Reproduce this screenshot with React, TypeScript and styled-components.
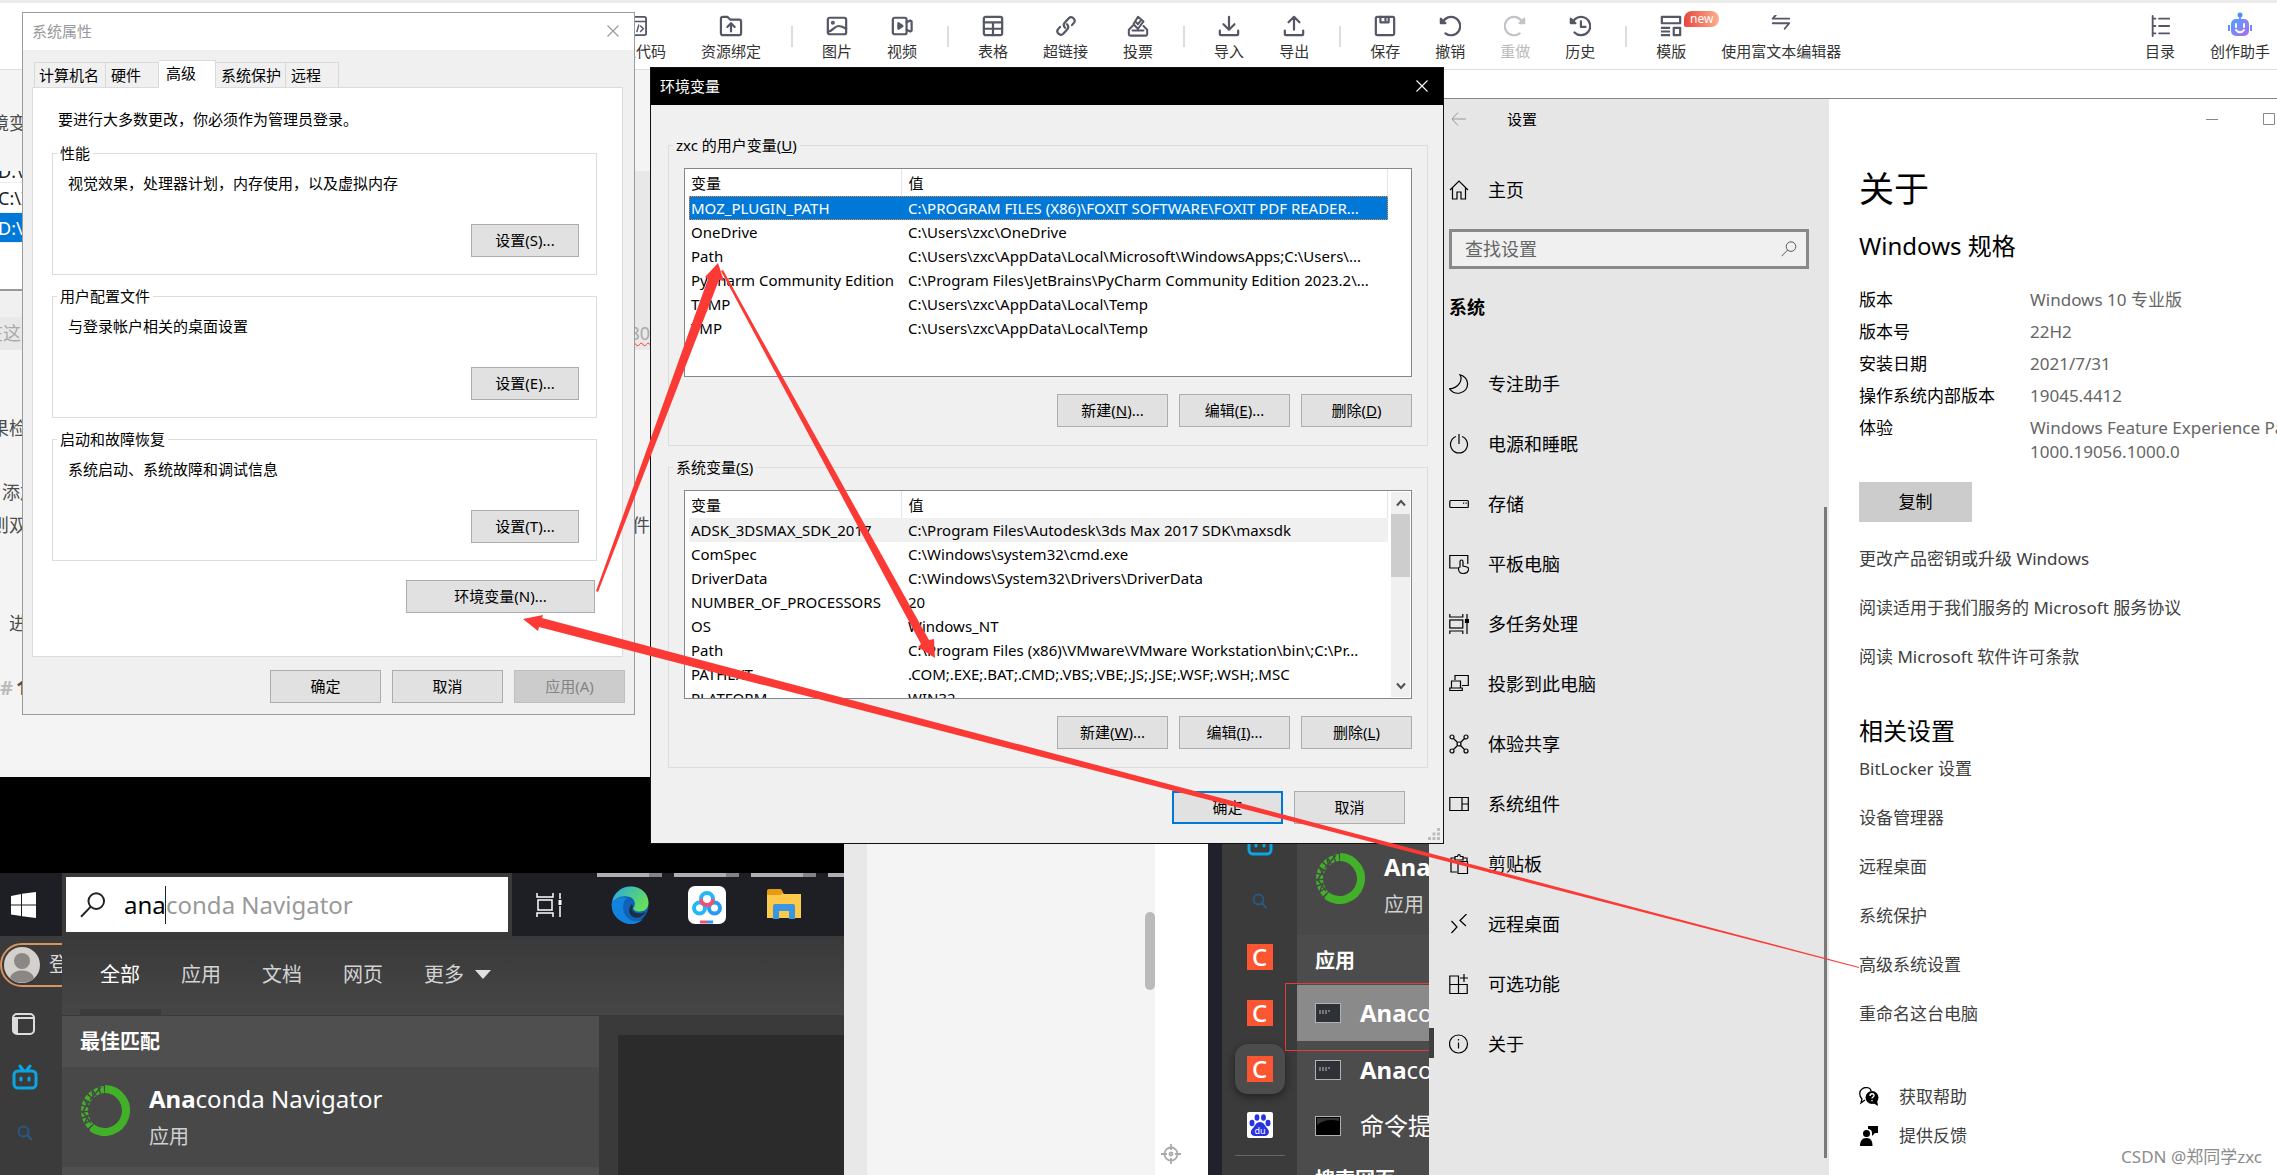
import React from "react";
import styled, { createGlobalStyle, css } from "styled-components";

const UI_FONT = '"Noto Sans", "Noto Sans CJK SC", sans-serif';

const GlobalStyle = createGlobalStyle`
  *, *::before, *::after { box-sizing: border-box; }
  html, body { margin: 0; padding: 0; background: #fff; }
  body { font-family: ${UI_FONT}; font-size: 15px; line-height: 20px; color: #000; }
  button, input { font: inherit; color: inherit; margin: 0; padding: 0; }
  h1, h2, h3, p, ul, dl, dd, fieldset { margin: 0; padding: 0; }
  ul { list-style: none; }
  a { text-decoration: none; color: inherit; }
  svg { display: block; flex: none; }
`;

/* ---------- page ---------- */

const Page = styled.div`
  position: relative;
  display: flex;
  flex-direction: column;
  height: 100vh;
  overflow: hidden;
  background: #fff;
`;

const Body = styled.div`
  flex: 1;
  min-height: 0;
  display: grid;
  grid-template-columns: 1429px minmax(0, 1fr);
`;

/* ---------- toolbar ---------- */

const Toolbar = styled.header`
  display: flex;
  justify-content: space-between;
  align-items: flex-start;
  height: 70px;
  padding: 12px 7px 0 606px;
  border-top: 3px solid #ececec;
  border-bottom: 1px solid #dedede;
  background: #fff;
`;

const ToolGroups = styled.div`
  display: flex;
`;

const ToolGroup = styled.div`
  display: flex;
  gap: 35px;
  & + & {
    margin-left: 30px;
    padding-left: 31px;
    background: linear-gradient(#ddd, #ddd) 0 11px / 2px 21px no-repeat;
  }
`;

const ToolButton = styled.button<{ $off?: boolean }>`
  position: relative;
  display: flex;
  flex-direction: column;
  align-items: center;
  gap: 4px;
  border: 0;
  background: none;
  white-space: nowrap;
  color: ${(p) => (p.$off ? "#c3c3c8" : "#555666")};
  span { color: ${(p) => (p.$off ? "#bbb" : "#333")}; }
`;

const NewBadge = styled.em`
  position: absolute;
  left: 28px;
  top: -4px;
  width: 35px;
  height: 16px;
  border-radius: 8px 8px 8px 2px;
  background: linear-gradient(90deg, #e8463f, #fbb08c);
  color: #fff;
  font-size: 12px;
  line-height: 15px;
  font-style: normal;
`;

/* ---------- editor column ---------- */

const LeftColumn = styled.div`
  display: flex;
  flex-direction: column;
  min-width: 0;
  min-height: 0;
`;

const Editor = styled.section`
  flex: 0 0 707px;
  width: 650px;
  padding-top: 41px;
  overflow: hidden;
  background: #f4f4f4;
  font-size: 18px;
  line-height: 24px;
  color: #4d4d4d;
`;

const EditorLine = styled.p<{ $indent?: number; $gap?: number }>`
  display: flex;
  justify-content: space-between;
  margin-top: ${(p) => p.$gap ?? 0}px;
  text-indent: ${(p) => p.$indent ?? -9}px;
  white-space: nowrap;
  span:last-child:not(:first-child) { text-indent: 0; }
`;

const QuoteBlock = styled.div`
  margin-top: 36px;
  background: #e8e8e8;
`;

const PathShot = styled.ul`
  width: 300px;
  height: 146px;
  overflow: hidden;
  background: linear-gradient(#fff, #fff) 0 0 / 100% 119px no-repeat #f0f0f0;
  li {
    height: 30px;
    line-height: 30px;
    padding-left: 1px;
    text-indent: -3px;
    border-bottom: 1px solid #eee;
    color: #222;
  }
  li:first-child { height: 12px; line-height: 0; }
  li.on { background: #0078d7; color: #fff; }
  li:last-child { height: 48px; border-bottom: 2px solid #999; }
`;

const QuoteLine = styled(EditorLine)`
  height: 33px;
  line-height: 32px;
  color: #aaa;
  u { text-indent: 0; text-decoration: underline wavy #f33 1px; text-underline-offset: 2px; }
`;

const EditorHeading = styled.h3`
  margin-top: 41px;
  font-size: 20px;
  line-height: 24px;
  i { font-style: normal; color: #bbb; margin-right: 3px; }
`;

/* ---------- bottom strip ---------- */

const Strip = styled.section`
  flex: 1;
  min-height: 0;
  display: flex;
  overflow: hidden;
`;

const StartShot = styled.div`
  flex: 0 0 844px;
  width: 844px;
  min-width: 0;
  display: flex;
  flex-direction: column;
  padding-top: 96px;
  overflow: hidden;
  background: #000;
  color: #fff;
`;

const TaskBar = styled.div`
  flex: none;
  display: flex;
  height: 63px;
  background: #1d1f25;
`;

const StartButton = styled.button`
  flex: none;
  width: 62px;
  padding-left: 10px;
  border: 0;
  background: none;
`;

const SearchFrame = styled.label`
  flex: none;
  width: 450px;
  padding: 4px;
  background: #3a3a3a;
`;

const SearchBox = styled.span`
  display: flex;
  align-items: center;
  height: 55px;
  padding-left: 14px;
  background: #fff;
  font-size: 24px;
  line-height: 38px;
  color: #999;
  svg { margin-right: 18px; }
  input {
    width: 42px;
    height: 38px;
    border: 0;
    border-right: 1px solid #222;
    outline: 0;
    color: #000;
    background: none;
  }
`;

const PinnedApps = styled.div`
  flex: 1;
  min-width: 0;
  display: flex;
  overflow: hidden;
  padding-left: 22px;
`;

const PinnedApp = styled.button<{ $open?: boolean }>`
  flex: none;
  display: flex;
  justify-content: center;
  padding: 13px 0 0;
  width: ${(p) => (p.$open ? 65 : 30)}px;
  margin-right: ${(p) => (p.$open ? 12 : 33)}px;
  border: 0;
  background: ${(p) =>
    p.$open ? "linear-gradient(90deg, #b0aeb0 80%, #858385 80%) 0 0 / 100% 4px no-repeat" : "none"};
`;

const StartBody = styled.div`
  flex: 1;
  min-height: 0;
  display: flex;
`;

const Rail = styled.div`
  flex: 0 0 62px;
  display: flex;
  flex-direction: column;
  overflow: hidden;
  background: #3b3b3b;
  padding-top: 7px;
`;

const AccountPill = styled.button`
  display: flex;
  align-items: center;
  gap: 9px;
  width: 120px;
  height: 44px;
  padding: 0 2px;
  border: 2px solid #d9935f;
  border-radius: 22px;
  background: none;
  color: #ddd;
  font-size: 20px;
`;

const RailIcons = styled.div`
  display: flex;
  flex-direction: column;
  gap: 28px;
  padding: 25px 0 0 12px;
`;

const StartPanel = styled.div`
  flex: 1;
  min-width: 0;
  display: flex;
  flex-direction: column;
  background: #4a4a4a;
`;

const StartTabs = styled.div`
  flex: 0 0 80px;
  display: flex;
  padding: 0 18px;
  border-bottom: 1px solid #3a3a3a;
  background: linear-gradient(#393939, #464646);
`;

const StartTab = styled.button<{ $on?: boolean }>`
  display: flex;
  align-items: center;
  gap: 11px;
  height: 79px;
  padding: 4px 21px 0 20px;
  border: 0;
  border-bottom: 6px solid ${(p) => (p.$on ? "#3c3c3c" : "transparent")};
  background: none;
  font-size: 20px;
  color: ${(p) => (p.$on ? "#fff" : "#d2d2d2")};
`;

const StartColumns = styled.div`
  flex: 1;
  min-height: 0;
  display: flex;
`;

const ResultColumn = styled.div`
  flex: 0 0 537px;
  background: #4f4f4f;
`;

const SectionTitle = styled.h3`
  padding: 0 18px;
  font-size: 20px;
  line-height: 51px;
  color: #fff;
`;

const PreviewColumn = styled.div`
  flex: 1;
  padding: 19px 0 0 19px;
  background: #3a3a3a;
  &::before { content: ""; display: block; height: 100%; background: #2b2b2b; }
`;

const BestMatch = styled.a`
  display: flex;
  gap: 18px;
  height: 100px;
  padding: 18px 0 0 18px;
  background: #484848;
  white-space: nowrap;
`;

const AppName = styled.strong`
  display: block;
  font-size: 24px;
  line-height: 28px;
  font-weight: 400;
  color: #fff;
  b { font-weight: 700; }
`;

const AppKind = styled.span`
  display: block;
  margin-top: 11px;
  font-size: 20px;
  line-height: 26px;
  color: #d0d0d0;
`;

const DocPreview = styled.div`
  flex: 1;
  display: flex;
  justify-content: flex-end;
  border-left: 23px solid #e8e8e8;
  background: #f4f4f4;
`;

const ScrollThumb = styled.div`
  width: 10px;
  height: 78px;
  margin-top: 135px;
  border-radius: 5px;
  background: #bababa;
`;

const Gutter = styled.div`
  flex: 0 0 53px;
  display: flex;
  align-items: flex-end;
  padding: 0 0 11px 6px;
  background: #fff;
`;

const AppsShot = styled.div`
  flex: 0 0 221px;
  display: flex;
  padding-left: 14px;
  overflow: hidden;
  background: #1f222b;
  color: #fff;
`;

const AppsRail = styled.div`
  flex: 0 0 75px;
  display: flex;
  flex-direction: column;
  align-items: center;
  padding-top: 53px;
  background: #3b3b3b;
`;

const RailTile = styled.div<{ $on?: boolean }>`
  flex: none;
  display: flex;
  align-items: center;
  justify-content: center;
  width: 50px;
  height: 56px;
  svg + & { margin-top: 17px; }
  ${(p) =>
    p.$on &&
    css`
      height: 50px;
      margin: 3px 0;
      border-radius: 13px;
      background: #4c4c4c;
      box-shadow: 0 3px 8px #222;
    `}
`;

const RailRule = styled.div`
  width: 50px;
  height: 1px;
  margin-top: 2px;
  background: #666;
`;

const AppsList = styled.div`
  flex: 1;
  min-width: 0;
  padding-top: 58px;
  background: #4c4c4c;
  white-space: nowrap;
`;

const AppsRow = styled.a<{ $on?: boolean }>`
  display: flex;
  align-items: center;
  gap: 19px;
  height: 56px;
  padding-left: 18px;
  font-size: 24px;
  line-height: 28px;
  background: ${(p) => (p.$on ? "#8a8a8a" : "transparent")};
`;

const RedFrame = styled.div`
  position: relative;
  z-index: 1;
  margin: -3px -10px -9px -12px;
  padding: 1px 0 0 11px;
  height: 68px;
  border: 1px solid #e5393c;
`;

/* ---------- classic dialogs ---------- */

const Dialog = styled.section<{ $x: number; $y: number; $w: number; $dark?: boolean }>`
  position: absolute;
  left: ${(p) => p.$x}px;
  top: ${(p) => p.$y}px;
  width: ${(p) => p.$w}px;
  border: 1px solid ${(p) => (p.$dark ? "#111" : "#9b9b9b")};
  background: #f0f0f0;
`;

const TitleBar = styled.div<{ $dark?: boolean }>`
  display: flex;
  align-items: center;
  justify-content: space-between;
  height: 37px;
  padding: 0 15px 2px 9px;
  background: ${(p) => (p.$dark ? "#000" : "#fff")};
  color: ${(p) => (p.$dark ? "#fff" : "#999")};
`;

const CloseButton = styled.button`
  border: 0;
  background: none;
`;

const Group = styled.fieldset`
  border: 1px solid #dcdcdc;
  min-width: 0;
  legend {
    margin-left: -11px;
    padding: 0 3px;
    line-height: 20px;
  }
`;

const PushButton = styled.button<{ $w?: number; $primary?: boolean }>`
  width: ${(p) => p.$w ?? 111}px;
  height: 33px;
  padding-bottom: 2px;
  border: ${(p) => (p.$primary ? "2px solid #0078d7" : "1px solid #adadad")};
  background: #e1e1e1;
  &:disabled { background: #ccc; border-color: #bfbfbf; color: #838383; }
`;

const ButtonRow = styled.div<{ $top: number; $right?: number; $bottom?: number }>`
  display: flex;
  justify-content: flex-end;
  gap: 11px;
  margin: ${(p) => `${p.$top}px ${p.$right ?? 0}px ${p.$bottom ?? 0}px 0`};
`;

const DialogTabs = styled.div`
  display: flex;
  align-items: flex-end;
  height: 37px;
  padding-left: 11px;
`;

const DialogTab = styled.button<{ $w: number; $on?: boolean }>`
  width: ${(p) => p.$w}px;
  height: 25px;
  padding-left: 5px;
  text-align: left;
  border: 1px solid #d9d9d9;
  border-width: 1px 1px 0 0;
  background: #f0f0f0;
  white-space: nowrap;
  &:first-child { border-left-width: 1px; padding-left: 4px; }
  ${(p) =>
    p.$on &&
    css`
      position: relative;
      height: 28px;
      margin-bottom: -1px;
      padding: 0 0 4px 7px;
      background: #fff;
    `}
`;

const TabPanel = styled.div`
  margin: 0 11px 0 9px;
  padding: 20px 25px 43px 19px;
  border: 1px solid #dcdcdc;
  background: #fff;
`;

const AdminNote = styled.p`
  padding-left: 6px;
  line-height: 22px;
  margin-bottom: 13px;
`;

const PropGroup = styled(Group)`
  padding: 10px 17px 17px 15px;
  & + & { margin-top: 11px; }
`;

const EnvBody = styled.div`
  padding: 30px 15px 19px 17px;
`;

const EnvGroup = styled(Group)`
  padding: 13px 15px 18px;
  & + & { margin-top: 11px; }
`;

const VarList = styled.div`
  display: flex;
  justify-content: space-between;
  height: 209px;
  padding-left: 4px;
  overflow: hidden;
  border: 1px solid #828790;
  background: #fff;
`;

const VarTable = styled.table`
  width: 699px;
  height: max-content;
  table-layout: fixed;
  border-collapse: collapse;
  th, td {
    padding: 0 0 0 2px;
    text-align: left;
    font-weight: 400;
    white-space: nowrap;
    overflow: hidden;
  }
  th:last-child, td:last-child { padding-left: 7px; }
  th { height: 27px; border-right: 1px solid #e5e5e5; }
  td { height: 24px; line-height: 22px; }
  th:first-child { width: 212px; }
`;

const VarRow = styled.tr<{ $state?: "active" | "idle" }>`
  ${(p) => p.$state === "active" && "background:#0078d7;color:#fff;outline:1px dotted #ff8728;outline-offset:-1px;"}
  ${(p) => p.$state === "idle" && "background:#f0f0f0;"}
`;

const VarScroll = styled.div`
  display: flex;
  flex-direction: column;
  align-items: center;
  justify-content: space-between;
  width: 19px;
  margin: 1px 1px 1px 0;
  padding: 7px 0;
  background: linear-gradient(#cdcdcd, #cdcdcd) 0 22px / 100% 63px no-repeat #f0f0f0;
`;

const Grip = styled.svg`
  position: absolute;
  right: 3px;
  bottom: 3px;
`;

/* ---------- settings window ---------- */

const Settings = styled.section`
  display: flex;
  min-width: 0;
  margin-top: 28px;
  border-top: 1px solid #858585;
  background: #fff;
  font-size: 17px;
  line-height: 24px;
  overflow: hidden;
`;

const Sidebar = styled.aside`
  position: relative;
  flex: 0 0 400px;
  background: #e6e6e6;
  font-size: 18px;
  h3 { margin: 26px 0 35px 20px; font-size: 18px; line-height: 24px; }
`;

const SideTitle = styled.div`
  display: flex;
  align-items: center;
  gap: 41px;
  height: 40px;
  padding-left: 22px;
  font-size: 15px;
  button { border: 0; background: none; color: #999; }
`;

const SideItem = styled.a<{ $home?: boolean; $on?: boolean }>`
  position: relative;
  display: flex;
  align-items: center;
  gap: 19px;
  height: ${(p) => (p.$home ? 40 : 60)}px;
  margin-top: ${(p) => (p.$home ? 31 : 0)}px;
  padding-left: 20px;
  ${(p) =>
    p.$on &&
    css`
      &::before {
        content: "";
        position: absolute;
        left: 0;
        top: 14px;
        width: 5px;
        height: 30px;
        background: #3f3f3f;
      }
    `}
`;

const SideSearch = styled.label`
  display: flex;
  align-items: center;
  height: 40px;
  margin: 19px 20px 0;
  padding: 0 9px 0 13px;
  border: 3px solid #898989;
  background: #f0f0f0;
  color: #555;
  input { flex: 1; min-width: 0; border: 0; outline: 0; background: none; }
  input::placeholder { color: #666; opacity: 1; }
`;

const SideScroll = styled.div`
  position: absolute;
  right: 2px;
  top: 408px;
  width: 3px;
  height: 651px;
  background: #7a7a7a;
`;

const Main = styled.main`
  flex: 1;
  min-width: 0;
  padding-left: 30px;
  white-space: nowrap;
  overflow: hidden;
  h1 { margin-top: 25px; font-size: 35px; line-height: 50px; font-weight: 400; }
`;

const WinControls = styled.div`
  display: flex;
  justify-content: flex-end;
  align-items: center;
  gap: 45px;
  height: 40px;
  padding-right: 2px;
  color: #888;
  button { border: 0; background: none; }
`;

const PaneTitle = styled.h2<{ $top: number }>`
  margin-top: ${(p) => p.$top}px;
  font-size: 24px;
  line-height: 36px;
  font-weight: 400;
`;

const Spec = styled.dl`
  display: grid;
  grid-template-columns: 171px 1fr;
  margin-top: 20px;
  dt, dd { padding: 4px 0; }
  dd { color: #666; }
`;

const CopyButton = styled.button`
  display: block;
  width: 113px;
  height: 40px;
  margin-top: 14px;
  border: 0;
  background: #ccc;
`;

const Links = styled.ul<{ $top: number; $gap: number }>`
  display: flex;
  flex-direction: column;
  gap: ${(p) => p.$gap}px;
  margin-top: ${(p) => p.$top}px;
  color: #404040;
  a { display: flex; align-items: center; gap: 20px; }
  svg { color: #000; }
`;

/* ---------- overlays ---------- */

const ArrowLayer = styled.svg`
  position: absolute;
  left: 0;
  top: 0;
  pointer-events: none;
`;

const Watermark = styled.span`
  position: absolute;
  right: 15px;
  bottom: 6px;
  font-size: 17px;
  line-height: 24px;
  color: #8c8c8c;
  text-shadow: 1px 1px 0 #fff;
`;

/* ---------- icons ---------- */

type Draw = { children: React.ReactNode; size?: number; w?: number; sw?: number; box?: string };
const Ico = ({ children, size = 22, w, sw = 2, box = "0 0 24 24" }: Draw) => (
  <svg width={w ?? size} height={size} viewBox={box} fill="none" stroke="currentColor" strokeWidth={sw} strokeLinecap="round" strokeLinejoin="round" aria-hidden="true">
    {children}
  </svg>
);
const Thin = ({ children }: { children: React.ReactNode }) => (
  <svg width="20" height="20" viewBox="0 0 20 20" fill="none" stroke="currentColor" strokeWidth="1.2" aria-hidden="true">
    {children}
  </svg>
);
const Cross = ({ size = 12 }: { size?: number }) => (
  <svg width={size} height={size} viewBox="0 0 12 12" stroke="currentColor" strokeWidth="1.1" aria-hidden="true">
    <path d="M.5 .5l11 11M11.5 .5l-11 11" />
  </svg>
);
const Lens = ({ size, sw = 1.2 }: { size: number; sw?: number }) => (
  <svg width={size} height={size} viewBox="0 0 20 20" fill="none" stroke="currentColor" strokeWidth={sw} aria-hidden="true">
    <circle cx="12.5" cy="7" r="6" />
    <path d="M8.3 11.3L.8 19" />
  </svg>
);

const toolIcons: Record<string, React.ReactNode> = {
  code: <Ico><rect x="2" y="2" width="21" height="20" rx="2" /><path d="M2 7h21M10 12l-3 3 3 3M13 18l2-7M17 12l3 3-3 3" strokeWidth="1.6" /></Ico>,
  bind: <Ico w={24} box="0 0 26 24" sw={2.4}><path d="M2 4a2 2 0 0 1 2-2h5l3 3h10a2 2 0 0 1 2 2v13a2 2 0 0 1-2 2H4a2 2 0 0 1-2-2zM13 18v-8M9 13l4-4 4 4" /></Ico>,
  image: <Ico sw={2.4}><rect x="2" y="3" width="20" height="18" rx="2" /><circle cx="7.5" cy="8.5" r="1" /><path d="M3 18c5-1 6-6 11-6 3 0 5 1 8 3" /></Ico>,
  video: <Ico sw={2.4}><rect x="2" y="3" width="15" height="18" rx="2" /><path d="M17 8l4-2 1.5 1v10L21 18l-4-2" /><path d="M8 9v6l4.500-3z" fill="currentColor" /></Ico>,
  table: <Ico sw={2.4}><rect x="2" y="2" width="20" height="20" rx="2" /><path d="M2 8h20M2 15h20M12 8v14" /></Ico>,
  link: <Ico sw={2.4}><path d="M11 14c-3-3-1-5 0-6l4-4.500c3-3 8 1 6 4.500l-2.500 3M13 10c3 3 1 5 0 6l-4 4.500c-3 3-8-1-6-4.500L5.500 13" /></Ico>,
  vote: <Ico sw={2.2}><path d="M6 12l-4 4v5a1.500 1.500 0 0 0 1.500 1.500h17A1.500 1.500 0 0 0 22 21v-5l-4-4M6 17h12M12 2l6 5-6 8-5-5zM10 8l2 2 3-4" /></Ico>,
  down: <Ico sw={2.4}><path d="M12 2v13M6 10l6 6 6-6M2 17v4a1 1 0 0 0 1 1h18a1 1 0 0 0 1-1v-4" /></Ico>,
  up: <Ico sw={2.4}><path d="M12 16V2M6 8l6-6 6 6M2 17v4a1 1 0 0 0 1 1h18a1 1 0 0 0 1-1v-4" /></Ico>,
  save: <Ico sw={2.4}><rect x="2" y="2" width="20" height="20" rx="1.500" /><path d="M7 2v6h9V2M12.500 3v3" /></Ico>,
  undo: <Ico sw={2.4}><path d="M2 4v5h5z" fill="currentColor" /><path d="M4 8a10 10 0 1 1 3 12" /></Ico>,
  redo: <Ico sw={2.4}><path d="M22 4v5h-5z" fill="currentColor" /><path d="M20 8a10 10 0 1 0-3 12" /></Ico>,
  history: <Ico sw={2.4}><path d="M2 4v5h5z" fill="currentColor" /><path d="M4 8a10 10 0 1 1 2 11M13 7v6h5" /></Ico>,
  layout: <Ico sw={2.4}><rect x="2" y="2" width="20" height="7" /><path d="M1 14h10M1 18h10M1 22h10" strokeLinecap="butt" /><rect x="15" y="14" width="7" height="8" /></Ico>,
  swap: <Ico><path d="M3 9h18M3 9l5-6M3 14h18l-5 6" transform="translate(0 -5)" /></Ico>,
  toc: <Ico><path d="M4 1v22M4 4h3M4 12h3M4 20h3M11 4h11M11 12h11M11 20h11" /></Ico>,
};

const Robot = () => (
  <svg width="26" height="26" viewBox="0 0 26 26" aria-hidden="true">
    <defs>
      <linearGradient id="robot" x1="0" y1="0" x2="1" y2="1">
        <stop offset="0" stopColor="#4aa3ff" />
        <stop offset="1" stopColor="#b06af0" />
      </linearGradient>
    </defs>
    <circle cx="13" cy="3" r="2.500" fill="#4a90f0" />
    <path d="M12 4h2v4h-2zM1 13h2v6H1zM23 13h2v6h-2z" fill="#6a8cf5" />
    <rect x="4" y="7" width="18" height="17" rx="5" fill="url(#robot)" />
    <path d="M9 12v3M17 12v3M9 18c2 3 6 3 8 0" stroke="#fff" strokeWidth="2" fill="none" strokeLinecap="round" />
  </svg>
);

const Bili = () => (
  <svg width="26" height="26" viewBox="0 0 26 26" fill="none" stroke="#0aa5e2" strokeWidth="3" strokeLinecap="round" aria-hidden="true">
    <rect x="2" y="7" width="22" height="17" rx="4" />
    <path d="M8 2l3 4M18 2l-3 4M9 14v2M17 14v2" />
  </svg>
);

const Ring = () => (
  <svg width="51" height="51" viewBox="0 0 51 51" fill="none" aria-hidden="true">
    <path d="M25 4A21.500 21.500 0 1 1 12 43" stroke="#43b02a" strokeWidth="8" />
    <path d="M24 4.500A21.500 21.500 0 0 0 13 43" stroke="#43b02a" strokeWidth="7" strokeDasharray="4 1.500" />
    <path d="M21 2L10 15M12 6l2 8M4 14l6 10M9 16L2 28M3 27l8 11M8 30l-3 8" stroke="#484848" strokeWidth="1.500" />
  </svg>
);

const WinLogo = () => (
  <svg width="27" height="26" viewBox="0 0 27 26" fill="#fff" aria-hidden="true">
    <path d="M1 4l10-2v10.500H1zM12 1.800L26 0v12.500H12zM1 13.500h10V24L1 22.500zM12 13.500h14V26l-14-1.800z" />
  </svg>
);

const TaskView = () => (
  <svg width="27" height="26" viewBox="0 0 27 26" fill="none" stroke="#fff" strokeWidth="1.500" aria-hidden="true">
    <path d="M1 1v4h16V1M1 25v-4h16v4M24 1v6M24 14v11" />
    <rect x="2" y="8" width="14" height="10" />
    <path d="M22.500 8h3v5h-3z" fill="#fff" stroke="none" />
  </svg>
);

const Edge = () => (
  <svg width="38" height="38" viewBox="0 0 38 38" aria-hidden="true">
    <defs>
      <linearGradient id="edgeTop" x1="0" y1="0" x2="1" y2=".6">
        <stop offset="0" stopColor="#2aa7e0" />
        <stop offset="1" stopColor="#66e05a" />
      </linearGradient>
    </defs>
    <circle cx="19" cy="19" r="18.500" fill="#0f62b8" />
    <path d="M1 17C3 6 11 .5 20 .5c10 0 17.500 7 17.500 16 0 6-4 9-9 9-4 0-7-2-6-4 3-4 1-10-6-11C9 9 3 13 1 17z" fill="url(#edgeTop)" />
    <path d="M1 17c3-5 10-7 15-5-5 4-6 15 2 21 5 4 11 2 14 0-5 6-15 7-22 2C3 31 0 24 1 17z" fill="#1382dc" />
    <path d="M22 21c-3 3 3 9 13 5-3 5-9 7-13 5-5-3-5-9-1-13z" fill="#1d1f25" opacity=".75" />
  </svg>
);

const Netdisk = () => (
  <svg width="38" height="38" viewBox="0 0 38 38" fill="none" aria-hidden="true">
    <rect width="38" height="38" rx="7" fill="#fff" />
    <circle cx="11.500" cy="22" r="5.500" stroke="#22b8f5" strokeWidth="4" />
    <circle cx="26.500" cy="22" r="5.500" stroke="#2a9bf5" strokeWidth="4" />
    <path d="M13 13a6 6 0 0 1 12 0" stroke="#22b8f5" strokeWidth="4" />
    <path d="M13 13a6 6 0 0 0 12 0" stroke="#f2506e" strokeWidth="4" />
    <path d="M12 36h7" stroke="#f2506e" strokeWidth="3" />
    <path d="M19 36h6" stroke="#2a9bf5" strokeWidth="3" />
  </svg>
);

const Folder = () => (
  <svg width="36" height="36" viewBox="0 0 36 36" aria-hidden="true">
    <path d="M1 5h14l3 3h17v24H1z" fill="#fcc94a" />
    <path d="M1 5a2 2 0 0 1 2-2h12l2 3-2 3H1z" fill="#e59b12" />
    <path d="M7 20a2 2 0 0 1 2-2h18a2 2 0 0 1 2 2v13h-6v-8H13v8H7z" fill="#3a96e0" />
  </svg>
);

const CLetter = styled.span`
  display: flex;
  align-items: center;
  justify-content: center;
  width: 26px;
  height: 26px;
  background: #fc5531;
  color: #fff;
  font-size: 24px;
  font-weight: 500;
  line-height: 24px;
`;

const Paw = () => (
  <svg width="26" height="26" viewBox="0 0 26 26" aria-hidden="true">
    <rect width="26" height="26" rx="2" fill="#fff" />
    <g fill="#2932e1">
      <ellipse cx="5" cy="11" rx="2.500" ry="3.200" />
      <ellipse cx="10" cy="5.500" rx="2.400" ry="3.300" />
      <ellipse cx="16.500" cy="5.500" rx="2.400" ry="3.300" />
      <ellipse cx="21" cy="11" rx="2.500" ry="3.200" />
      <path d="M13 10c4 0 5 4 7 6 4 4 1 8-2 8H8c-4 0-6-4-2-8 2-2 3-6 7-6z" />
    </g>
    <text x="13" y="21.500" textAnchor="middle" fontSize="9" fill="#fff" fontFamily={UI_FONT}>du</text>
  </svg>
);

const Terminal = ({ plain }: { plain?: boolean }) => (
  <svg width="26" height="20" viewBox="0 0 26 20" aria-hidden="true">
    <rect x=".5" y=".5" width="25" height="19" fill={plain ? "#000" : "#2e3236"} stroke="#aeb2b6" />
    {plain ? <path d="M2 9c6-5 14-6 22-4V2H2z" fill="#333" /> : <path d="M4 8h12M4 10h8" stroke="#bbb" strokeDasharray="2 1" />}
  </svg>
);

const sideIcons: Record<string, React.ReactNode> = {
  home: <Thin><path d="M1 10l9-9 9 9M3.500 8v11h4.500v-7h4v7h4.500V8" /></Thin>,
  moon: <Thin><path d="M11 .8c3 5-1 13-10.500 14C3 18 7 19.800 11 19c5-1 8-5 7.500-10C18 5 15 2 11 .8z" /></Thin>,
  power: <Thin><path d="M10 0v10M7 2.500a8.500 8.500 0 1 0 6 0" /></Thin>,
  disk: <Thin><rect x=".8" y="6.500" width="18.500" height="7" rx="1" /><path d="M14 9.200h1.200M16.500 9.200h1.200" /></Thin>,
  tablet: <Thin><path d="M10 14H.8V1.500h18V10" /><path d="M11 13V7.500c0-2 3-2 3 0V12l4 1c2 .5 1.500 2 1.500 3-.5 2-2 3.500-5 3.500-3 0-5-2-5-4.500 0-1 .5-2 1.500-2z" /></Thin>,
  tasks: <Thin><path d="M.8 0v3h13V0M.8 20v-3h13v3M18 0v5M18 9v11" /><rect x=".8" y="6" width="13" height="8" /><path d="M16.500 5.500h3v3h-3z" fill="currentColor" /></Thin>,
  project: <Thin><path d="M6 6V1.500h13.300v10H13" /><path d="M2.500 14V7h9v7M.8 14h12.500v2.500H.8z" /></Thin>,
  share: <Thin><circle cx="3" cy="3" r="2" /><circle cx="17" cy="3" r="2" /><circle cx="3" cy="17" r="2" /><circle cx="17" cy="17" r="2" /><circle cx="10" cy="10" r="2" /><path d="M4.500 4.500l4 4M15.500 4.500l-4 4M4.500 15.500l4-4M15.500 15.500l-4-4" /></Thin>,
  parts: <Thin><path d="M.8 3.500h18.500v13H.8zM13 3.500v13M13 10h6" /></Thin>,
  clip: <Thin><path d="M6 4H2v14h6M14 4h4v3M6 2.500h2.500C9 0 11 0 11.500 2.500H14V6H6zM9 7.500h9.500v12H9z" /></Thin>,
  remote: <Thin><path d="M2.500 7l5.500 6-5.500 6M17.500 0L11 6.500l6 5.500" /></Thin>,
  optional: <Thin><path d="M.8 2h8.700v17.500H.8zM9.500 10.500h8.700v9H9.500M.8 10.500h8.700M15 0v8M11 4h8" /></Thin>,
  info: <Thin><circle cx="9.500" cy="10" r="9" /><path d="M9.500 8.500v6M9.500 5v1.500" /></Thin>,
};

/* ---------- data ---------- */

type Tool = { label: string; icon: string; off?: boolean; badge?: string };
const tools: Tool[][] = [
  [{ label: "插入代码", icon: "code" }, { label: "资源绑定", icon: "bind" }],
  [{ label: "图片", icon: "image" }, { label: "视频", icon: "video" }],
  [{ label: "表格", icon: "table" }, { label: "超链接", icon: "link" }, { label: "投票", icon: "vote" }],
  [{ label: "导入", icon: "down" }, { label: "导出", icon: "up" }],
  [{ label: "保存", icon: "save" }, { label: "撤销", icon: "undo" }, { label: "重做", icon: "redo", off: true }, { label: "历史", icon: "history" }],
  [{ label: "模版", icon: "layout", badge: "new" }, { label: "使用富文本编辑器", icon: "swap" }],
];

const userVars = [
  ["MOZ_PLUGIN_PATH", "C:\\PROGRAM FILES (X86)\\FOXIT SOFTWARE\\FOXIT PDF READER..."],
  ["OneDrive", "C:\\Users\\zxc\\OneDrive"],
  ["Path", "C:\\Users\\zxc\\AppData\\Local\\Microsoft\\WindowsApps;C:\\Users\\..."],
  ["PyCharm Community Edition", "C:\\Program Files\\JetBrains\\PyCharm Community Edition 2023.2\\..."],
  ["TEMP", "C:\\Users\\zxc\\AppData\\Local\\Temp"],
  ["TMP", "C:\\Users\\zxc\\AppData\\Local\\Temp"],
];
const systemVars = [
  ["ADSK_3DSMAX_SDK_2017", "C:\\Program Files\\Autodesk\\3ds Max 2017 SDK\\maxsdk"],
  ["ComSpec", "C:\\Windows\\system32\\cmd.exe"],
  ["DriverData", "C:\\Windows\\System32\\Drivers\\DriverData"],
  ["NUMBER_OF_PROCESSORS", "20"],
  ["OS", "Windows_NT"],
  ["Path", "C:\\Program Files (x86)\\VMware\\VMware Workstation\\bin\\;C:\\Pr..."],
  ["PATHEXT", ".COM;.EXE;.BAT;.CMD;.VBS;.VBE;.JS;.JSE;.WSF;.WSH;.MSC"],
  ["PLATFORM", "WIN32"],
];

const propGroups = [
  { title: "性能", text: "视觉效果，处理器计划，内存使用，以及虚拟内存", key: "S" },
  { title: "用户配置文件", text: "与登录帐户相关的桌面设置", key: "E" },
  { title: "启动和故障恢复", text: "系统启动、系统故障和调试信息", key: "T" },
];

const sideItems = [
  ["moon", "专注助手"], ["power", "电源和睡眠"], ["disk", "存储"], ["tablet", "平板电脑"],
  ["tasks", "多任务处理"], ["project", "投影到此电脑"], ["share", "体验共享"], ["parts", "系统组件"],
  ["clip", "剪贴板"], ["remote", "远程桌面"], ["optional", "可选功能"], ["info", "关于"],
];

/* ---------- sections ---------- */

const TopBar = () => (
  <Toolbar>
    <ToolGroups>
      {tools.map((group, i) => (
        <ToolGroup key={i}>
          {group.map((t) => (
            <ToolButton key={t.label} $off={t.off}>
              {toolIcons[t.icon]}
              <span>{t.label}</span>
              {t.badge && <NewBadge>{t.badge}</NewBadge>}
            </ToolButton>
          ))}
        </ToolGroup>
      ))}
    </ToolGroups>
    <ToolGroup>
      <ToolButton>{toolIcons.toc}<span>目录</span></ToolButton>
      <ToolButton>
        <svg width="26" height="22" viewBox="0 3 26 22" overflow="visible" aria-hidden="true"><Robot /></svg>
        <span>创作助手</span>
      </ToolButton>
    </ToolGroup>
  </Toolbar>
);

const EditorPane = () => (
  <Editor>
    <EditorLine><span>境变量</span></EditorLine>
    <QuoteBlock>
      <PathShot>
        <li>D:\</li>
        <li>C:\I</li>
        <li className="on">D:\</li>
        <li />
      </PathShot>
      <QuoteLine $indent={-15}><span>在这里</span><u>80</u></QuoteLine>
    </QuoteBlock>
    <EditorLine $gap={66}><span>果检测</span></EditorLine>
    <EditorLine $gap={40} $indent={2}><span>添加</span></EditorLine>
    <EditorLine $gap={9}><span>则双击</span><span>件</span></EditorLine>
    <EditorLine $gap={74} $indent={9}><span>进入</span></EditorLine>
    <EditorHeading><i>#</i>1</EditorHeading>
  </Editor>
);

const StartMenu = () => (
  <StartShot>
    <TaskBar>
      <StartButton aria-label="开始"><WinLogo /></StartButton>
      <SearchFrame>
        <SearchBox>
          <svg width="26" height="26" viewBox="0 0 20 20" fill="none" stroke="#222" strokeWidth="1.500"><circle cx="12.500" cy="7" r="6" /><path d="M8.300 11.300L.8 19" /></svg>
          <input aria-label="搜索" defaultValue="ana" />
          conda Navigator
        </SearchBox>
      </SearchFrame>
      <PinnedApps>
        <PinnedApp aria-label="任务视图"><svg width="27" height="38" viewBox="0 -6 27 38"><TaskView /></svg></PinnedApp>
        <PinnedApp $open aria-label="Edge"><Edge /></PinnedApp>
        <PinnedApp $open aria-label="网盘"><Netdisk /></PinnedApp>
        <PinnedApp $open aria-label="文件"><Folder /></PinnedApp>
        <PinnedApp $open aria-label="应用" />
      </PinnedApps>
    </TaskBar>
    <StartBody>
      <Rail>
        <AccountPill>
          <svg width="36" height="36" viewBox="0 0 36 36"><circle cx="18" cy="18" r="18" fill="#d4d0cc" /><circle cx="18" cy="14" r="8" fill="#8b8784" /><path d="M6 31c2-10 22-10 24 0-6 6-18 6-24 0z" fill="#8b8784" /></svg>
          登
        </AccountPill>
        <RailIcons>
          <svg width="23" height="24" viewBox="0 0 23 24" fill="none" stroke="#ddd" strokeWidth="2"><rect x="1" y="2" width="21" height="20" rx="4" /><path d="M2 6h19" /><path d="M4 6v15" strokeWidth="4" /></svg>
          <Bili />
          <svg width="24" height="30" viewBox="-4 0 24 30" fill="none" stroke="#285a88" strokeWidth="1.800"><circle cx="7.500" cy="13.500" r="5" /><path d="M11 17l5 5" /></svg>
        </RailIcons>
      </Rail>
      <StartPanel>
        <StartTabs>
          <StartTab $on>全部</StartTab>
          <StartTab>应用</StartTab>
          <StartTab>文档</StartTab>
          <StartTab>网页</StartTab>
          <StartTab>更多<svg width="16" height="9" viewBox="0 0 16 9" fill="#e0e0e0"><path d="M0 0h16L8 9z" /></svg></StartTab>
        </StartTabs>
        <StartColumns>
          <ResultColumn>
            <SectionTitle>最佳匹配</SectionTitle>
            <BestMatch href="#navigator">
              <Ring />
              <span>
                <AppName><b>Ana</b>conda Navigator</AppName>
                <AppKind>应用</AppKind>
              </span>
            </BestMatch>
          </ResultColumn>
          <PreviewColumn />
        </StartColumns>
      </StartPanel>
    </StartBody>
  </StartShot>
);

const AppsMenu = () => (
  <AppsShot>
    <AppsRail>
      <Bili />
      <RailTile><svg width="16" height="16" viewBox="0 0 16 16" fill="none" stroke="#285a88" strokeWidth="1.800"><circle cx="6.500" cy="6.500" r="5" /><path d="M10 10.500l5 5" /></svg></RailTile>
      <RailTile><CLetter>C</CLetter></RailTile>
      <RailTile><CLetter>C</CLetter></RailTile>
      <RailTile $on><CLetter>C</CLetter></RailTile>
      <RailTile><Paw /></RailTile>
      <RailRule />
    </AppsRail>
    <AppsList>
      <BestMatch href="#navigator">
        <Ring />
        <span>
          <AppName><b>Ana</b></AppName>
          <AppKind>应用</AppKind>
        </span>
      </BestMatch>
      <SectionTitle>应用</SectionTitle>
      <RedFrame>
        <AppsRow $on href="#prompt"><Terminal /><AppName><b>Ana</b>co</AppName></AppsRow>
      </RedFrame>
      <AppsRow href="#shell"><Terminal /><AppName><b>Ana</b>co</AppName></AppsRow>
      <AppsRow href="#cmd"><Terminal plain />命令提</AppsRow>
      <SectionTitle>搜索网页</SectionTitle>
    </AppsList>
  </AppsShot>
);

const SystemProps = () => (
  <Dialog $x={22} $y={12} $w={613}>
    <TitleBar>系统属性<CloseButton aria-label="关闭"><Cross /></CloseButton></TitleBar>
    <DialogTabs role="tablist">
      <DialogTab role="tab" $w={72}>计算机名</DialogTab>
      <DialogTab role="tab" $w={53}>硬件</DialogTab>
      <DialogTab role="tab" $w={57} $on>高级</DialogTab>
      <DialogTab role="tab" $w={70}>系统保护</DialogTab>
      <DialogTab role="tab" $w={53}>远程</DialogTab>
    </DialogTabs>
    <TabPanel>
      <AdminNote>要进行大多数更改，你必须作为管理员登录。</AdminNote>
      {propGroups.map((g) => (
        <PropGroup key={g.key}>
          <legend>{g.title}</legend>
          <p>{g.text}</p>
          <ButtonRow $top={31}><PushButton $w={108}>设置({g.key})...</PushButton></ButtonRow>
        </PropGroup>
      ))}
      <ButtonRow $top={19} $right={2}><PushButton $w={189}>环境变量(N)...</PushButton></ButtonRow>
    </TabPanel>
    <ButtonRow $top={13} $right={9} $bottom={11}>
      <PushButton>确定</PushButton>
      <PushButton>取消</PushButton>
      <PushButton disabled>应用(A)</PushButton>
    </ButtonRow>
  </Dialog>
);

const Vars = ({ rows, state, scroll }: { rows: string[][]; state: "active" | "idle"; scroll?: boolean }) => (
  <VarList>
    <VarTable>
      <thead><tr><th>变量</th><th>值</th></tr></thead>
      <tbody>
        {rows.map(([name, value], i) => (
          <VarRow key={name} $state={i === 0 ? state : undefined}><td>{name}</td><td>{value}</td></VarRow>
        ))}
      </tbody>
    </VarTable>
    {scroll && (
      <VarScroll>
        <svg width="10" height="8" viewBox="0 0 10 8" fill="none" stroke="#505050" strokeWidth="2"><path d="M1 6.500l4-4.500 4 4.500" /></svg>
        <svg width="10" height="8" viewBox="0 0 10 8" fill="none" stroke="#505050" strokeWidth="2"><path d="M1 1.500L5 6l4-4.500" /></svg>
      </VarScroll>
    )}
  </VarList>
);

const EnvDialog = () => (
  <Dialog $x={650} $y={67} $w={794} $dark>
    <TitleBar $dark>环境变量<CloseButton aria-label="关闭"><Cross /></CloseButton></TitleBar>
    <EnvBody>
      <EnvGroup>
        <legend>zxc 的用户变量(<u>U</u>)</legend>
        <Vars rows={userVars} state="active" />
        <ButtonRow $top={17}>
          <PushButton>新建(<u>N</u>)...</PushButton>
          <PushButton>编辑(<u>E</u>)...</PushButton>
          <PushButton>删除(<u>D</u>)</PushButton>
        </ButtonRow>
      </EnvGroup>
      <EnvGroup>
        <legend>系统变量(<u>S</u>)</legend>
        <Vars rows={systemVars} state="idle" scroll />
        <ButtonRow $top={17}>
          <PushButton>新建(<u>W</u>)...</PushButton>
          <PushButton>编辑(<u>I</u>)...</PushButton>
          <PushButton>删除(<u>L</u>)</PushButton>
        </ButtonRow>
      </EnvGroup>
      <ButtonRow $top={23} $right={23}>
        <PushButton $primary>确定</PushButton>
        <PushButton>取消</PushButton>
      </ButtonRow>
    </EnvBody>
    <Grip width="12" height="12" viewBox="0 0 12 12" fill="#bcbcbc">
      <path d="M9 0h3v3H9zM9 4.500h3v3H9zM9 9h3v3H9zM4.500 4.500h3v3h-3zM4.500 9h3v3h-3zM0 9h3v3H0z" />
    </Grip>
  </Dialog>
);

const SettingsWindow = () => (
  <Settings>
    <Sidebar>
      <SideTitle>
        <button aria-label="返回"><svg width="15" height="14" viewBox="0 0 15 14" fill="none" stroke="currentColor"><path d="M7 .5L1 7l6 6.500M1 7h14" /></svg></button>
        设置
      </SideTitle>
      <SideItem href="#home" $home>{sideIcons.home}主页</SideItem>
      <SideSearch>
        <input type="text" placeholder="查找设置" aria-label="查找设置" />
        <Lens size={16} />
      </SideSearch>
      <h3>系统</h3>
      <nav>
        {sideItems.map(([icon, label]) => (
          <SideItem key={icon} href={`#${icon}`} $on={icon === "info"}>{sideIcons[icon]}{label}</SideItem>
        ))}
      </nav>
      <SideScroll />
    </Sidebar>
    <Main>
      <WinControls>
        <button aria-label="最小化"><svg width="12" height="12" viewBox="0 0 12 12" stroke="currentColor"><path d="M0 6.500h12" /></svg></button>
        <button aria-label="最大化"><svg width="12" height="12" viewBox="0 0 12 12" stroke="currentColor" fill="none"><path d="M.5 .5h11v11H.5z" /></svg></button>
      </WinControls>
      <h1>关于</h1>
      <PaneTitle $top={14}>Windows 规格</PaneTitle>
      <Spec>
        <dt>版本</dt><dd>Windows 10 专业版</dd>
        <dt>版本号</dt><dd>22H2</dd>
        <dt>安装日期</dt><dd>2021/7/31</dd>
        <dt>操作系统内部版本</dt><dd>19045.4412</dd>
        <dt>体验</dt><dd>Windows Feature Experience Pack<br />1000.19056.1000.0</dd>
      </Spec>
      <CopyButton>复制</CopyButton>
      <Links $top={25} $gap={25}>
        <li><a href="#key">更改产品密钥或升级 Windows</a></li>
        <li><a href="#services">阅读适用于我们服务的 Microsoft 服务协议</a></li>
        <li><a href="#license">阅读 Microsoft 软件许可条款</a></li>
      </Links>
      <PaneTitle $top={44}>相关设置</PaneTitle>
      <Links $top={8} $gap={25}>
        <li><a href="#bitlocker">BitLocker 设置</a></li>
        <li><a href="#devices">设备管理器</a></li>
        <li><a href="#rdp">远程桌面</a></li>
        <li><a href="#protect">系统保护</a></li>
        <li><a href="#advanced">高级系统设置</a></li>
        <li><a href="#rename">重命名这台电脑</a></li>
      </Links>
      <Links $top={59} $gap={15}>
        <li>
          <a href="#help">
            <svg width="20" height="20" viewBox="0 0 20 20" fill="none"><path d="M6 13l-4 3 1-4C0 9 0 4 3 2c4-3 9-1 9 2" stroke="currentColor" strokeWidth="1.300" /><circle cx="13" cy="10.500" r="6.500" fill="currentColor" /><path d="M14 16l5 3-1-6z" fill="currentColor" /><path d="M11 9c0-3 4-3 4-.5 0 1.500-2 1.500-2 3M13 13v1.300" stroke="#fff" strokeWidth="1.400" /></svg>
            获取帮助
          </a>
        </li>
        <li>
          <a href="#feedback">
            <svg width="20" height="20" viewBox="0 0 20 20" fill="currentColor"><path d="M9 0h10v7h-3l-3 3V7c0-3-2-4-4-4z" /><circle cx="7.500" cy="7.500" r="3.500" /><path d="M1 20c0-5 2-8 6.500-8s6 3 6 8z" /></svg>
            提供反馈
          </a>
        </li>
      </Links>
    </Main>
  </Settings>
);

export default function App() {
  return (
    <Page lang="zh-CN">
      <GlobalStyle />
      <TopBar />
      <Body>
        <LeftColumn>
          <EditorPane />
          <Strip>
            <StartMenu />
            <DocPreview><ScrollThumb /></DocPreview>
            <Gutter>
              <svg width="20" height="20" viewBox="0 0 20 20" fill="none" stroke="#aaa" strokeWidth="1.800"><circle cx="10" cy="10" r="6.500" /><circle cx="10" cy="10" r="1.500" /><path d="M10 0v6M10 14v6M0 10h6M14 10h6" /></svg>
            </Gutter>
            <AppsMenu />
          </Strip>
        </LeftColumn>
        <SettingsWindow />
      </Body>
      <SystemProps />
      <EnvDialog />
      <ArrowLayer width="2277" height="1175" viewBox="0 0 2277 1175" fill="#fb3a36" aria-hidden="true">
        <path d="M596 591L708 279l-3-2 13-14 6 18-5-1L598 592z" />
        <path d="M721 271L921 644l-3 3 17 11-1-19-5 1L723 270z" />
        <path d="M1859 967L542 618l1-3-20 4 15 12 1-4L1859 968z" />
      </ArrowLayer>
      <Watermark>CSDN @郑同学zxc</Watermark>
    </Page>
  );
}
